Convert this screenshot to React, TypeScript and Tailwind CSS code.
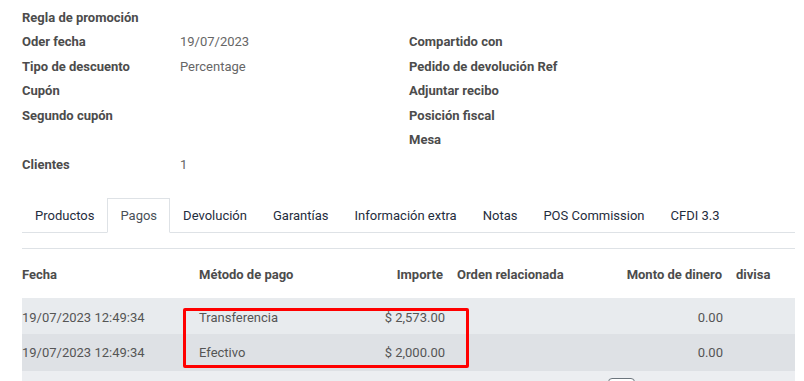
import React from "react";

const left: [string, string][] = [
  ["Regla de promoción", ""],
  ["Oder fecha", "19/07/2023"],
  ["Tipo de descuento", "Percentage"],
  ["Cupón", ""],
  ["Segundo cupón", ""],
  ["", ""],
  ["Clientes", "1"],
];

const right = ["", "Compartido con", "Pedido de devolución Ref", "Adjuntar recibo", "Posición fiscal", "Mesa"];

const tabs = ["Productos", "Pagos", "Devolución", "Garantías", "Información extra", "Notas", "POS Commission", "CFDI 3.3"];

const payments = [
  { date: "19/07/2023 12:49:34", method: "Transferencia", amount: "$ 2,573.00", cash: "0.00", bg: "bg-[#e8ebee] pt-[3px]" },
  { date: "19/07/2023 12:49:34", method: "Efectivo", amount: "$ 2,000.00", cash: "0.00", bg: "bg-[#dee1e5]" },
];

const cols = "grid grid-cols-[163px_185px_80px_165px_114px_1fr] items-center";

export default function App() {
  return (
    <div className="w-[804px] h-[381px] overflow-hidden bg-white text-[13px] font-['Roboto',_'Liberation_Sans',_sans-serif]">
      <div className="flex pl-[22px] pt-[5px]">
        <div className="w-[387px]">
          {left.map(([label, value], i) => (
            <div key={i} className="flex items-center h-[24.5px]">
              <span className="w-[158px] font-bold text-[#4c4c4c]">{label}</span>
              <span className="text-[#666666]">{value}</span>
            </div>
          ))}
        </div>
        <div>
          {right.map((label, i) => (
            <div key={i} className="flex items-center h-[24.5px] font-bold text-[#4c4c4c]">
              {label}
            </div>
          ))}
        </div>
      </div>

      <div className="mx-[22px] mt-[21px] w-[773px]">
        <ul className="flex h-[35px] border-b border-[#dee2e6]">
          {tabs.map((t) => {
            const active = t === "Pagos";
            return (
              <li
                key={t}
                className={
                  active
                    ? "flex items-center pt-[2px] px-[12px] -mb-px border border-[#dee2e6] border-b-white bg-white text-[#495057]"
                    : "flex items-center pt-[2px] px-[12px] border border-transparent text-[#1f2d3d]"
                }
              >
                {t}
              </li>
            );
          })}
        </ul>

        <div className="mt-[15px] border-t border-[#dee2e6]">
          <div className={`${cols} h-[49px] pt-[3px] font-bold text-[#4c4c4c]`}>
            <span>Fecha</span>
            <span className="pl-[14px]">Método de pago</span>
            <span className="pr-[7px] text-right">Importe</span>
            <span className="pl-[7px]">Orden relacionada</span>
            <span className="pr-[7px] text-right whitespace-nowrap">Monto de dinero</span>
            <span className="pl-[7px]">divisa</span>
          </div>

          <div className="relative">
            {payments.map((p, i) => (
              <div key={i} className={`${cols} h-[36.5px] ${p.bg} text-[#555555]`}>
                <span>{p.date}</span>
                <span className="pl-[14px]">{p.method}</span>
                <span className="pr-[5px] text-right whitespace-nowrap">{p.amount}</span>
                <span />
                <span className="pr-[6px] text-right">{p.cash}</span>
                <span />
              </div>
            ))}
            <div className="absolute left-[161px] top-[10px] w-[286px] h-[60px] border-[3px] border-[#ff0000] rounded-[2px]" />
            <div className="h-[30px] bg-[#eceef1] pl-[586px] pt-[7px]">
              <div className="w-[27px] h-[20px] rounded-[4px] border border-[#6c757d] bg-white" />
            </div>
          </div>
        </div>
      </div>
    </div>
  );
}
